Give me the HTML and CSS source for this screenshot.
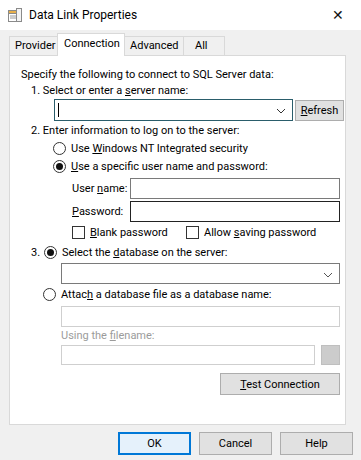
FILE: index.html
```html
<!DOCTYPE html>
<html lang="en">
<head>
    <meta charset="UTF-8">
    <title>Data Link Properties</title>
    <link rel="stylesheet" href="styles.css">
</head>
<body>
    <div class="dlg_titlebar">
        <svg class="dlg_icon" width="16" height="16" viewBox="0 0 16 16">
            <rect x="1.5" y="3.5" width="10" height="11" fill="#fff" stroke="#8a8a8a"/>
            <rect x="1.5" y="3.5" width="10" height="3" fill="#e8b04a" stroke="#8a8a8a"/>
            <rect x="9.5" y="1.5" width="5" height="13" fill="#f4f4f4" stroke="#8a8a8a"/>
            <line x1="3" y1="9" x2="9" y2="9" stroke="#9a9a9a"/>
            <line x1="3" y1="11" x2="9" y2="11" stroke="#9a9a9a"/>
        </svg>
        <span class="dlg_title">Data Link Properties</span>
        <span class="dlg_close">&#x2715;</span>
    </div>

    <div class="dlg_body">
        <div class="dlg_tabs">
            <div class="dlg_tab tab_provider">Provider</div>
            <div class="dlg_tab dlg_tab_active">Connection</div>
            <div class="dlg_tab tab_advanced">Advanced</div>
            <div class="dlg_tab tab_all">All</div>
        </div>

        <div class="dlg_panel">
            <div class="row_text">Specify the following to connect to SQL Server data:</div>
            <div class="row_text indent1">1. Select or enter a <u>s</u>erver name:</div>
            <div class="row_server">
                <div class="combo combo_focus">
                    <span class="caret"></span>
                    <svg class="chev" width="10" height="6" viewBox="0 0 10 6"><path d="M1 1 L5 5 L9 1" fill="none" stroke="#333"/></svg>
                </div>
                <button class="btn btn_refresh"><u>R</u>efresh</button>
            </div>
            <div class="row_text indent1 step2">2. Enter information to log on to the server:</div>
            <div class="row_opt indent2 opt_first"><span class="radio"></span><span>Use <u>W</u>indows NT Integrated security</span></div>
            <div class="row_opt indent2"><span class="radio radio_on"></span><span><u>U</u>se a specific user name and password:</span></div>
            <div class="row_field">
                <span class="field_label">User <u>n</u>ame:</span>
                <div class="textbox"></div>
            </div>
            <div class="row_field row_field2">
                <span class="field_label"><u>P</u>assword:</span>
                <div class="textbox textbox_dark"></div>
            </div>
            <div class="row_checks">
                <span class="check_item check_first"><span class="check"></span><span><u>B</u>lank password</span></span>
                <span class="check_item"><span class="check"></span><span>Allow <u>s</u>aving password</span></span>
            </div>
            <div class="row_opt indent1 step3"><span class="num">3.</span><span class="radio radio_on"></span><span>Select the <u>d</u>atabase on the server:</span></div>
            <div class="row_db">
                <div class="combo">
                    <svg class="chev" width="10" height="6" viewBox="0 0 10 6"><path d="M1 1 L5 5 L9 1" fill="none" stroke="#555"/></svg>
                </div>
            </div>
            <div class="row_opt attach"><span class="radio"></span><span>Attac<u>h</u> a database file as a database name:</span></div>
            <div class="row_db2"><div class="textbox textbox_off"></div></div>
            <div class="row_text disabled_text">Using the <u>f</u>ilename:</div>
            <div class="row_file">
                <div class="textbox textbox_off"></div>
                <span class="browse_btn"></span>
            </div>
            <div class="row_test">
                <button class="btn btn_test"><u>T</u>est Connection</button>
            </div>
        </div>

        <div class="dlg_footer">
            <button class="btn btn_foot btn_default">OK</button>
            <button class="btn btn_foot">Cancel</button>
            <button class="btn btn_foot">Help</button>
        </div>
    </div>
</body>
</html>
```

FILE: styles.css
```css
* {
    margin: 0;
    padding: 0;
    box-sizing: border-box;
}

body {
    width: 361px;
    height: 460px;
    overflow: hidden;
    font-family: Roboto, "Liberation Sans", Arial, sans-serif;
    font-size: 11px;
    color: #000;
    background: #f0f0f0;
    white-space: nowrap;
}

u {
    text-decoration: underline;
    text-underline-offset: 1px;
}

.dlg_titlebar {
    height: 30px;
    background: #fff;
    display: flex;
    align-items: center;
    padding-left: 7px;
}

.dlg_icon {
    margin-right: 6px;
}

.dlg_title {
    font-size: 12px;
    flex: 1;
}

.dlg_close {
    width: 46px;
    text-align: center;
    font-size: 14px;
    color: #111;
}

.dlg_body {
    padding: 6px 15px 0 9px;
}

.dlg_tabs {
    display: flex;
    height: 19px;
    align-items: flex-end;
}

.dlg_tab {
    height: 19px;
    padding-left: 5px;
    line-height: 18px;
    border: 1px solid #d9d9d9;
    border-bottom: none;
    background: #f0f0f0;
}

.tab_provider {
    width: 49px;
    margin-right: -1px;
}

.dlg_tab_active {
    width: 68px;
    height: 23px;
    background: #fff;
    padding-left: 6px;
    line-height: 20px;
    position: relative;
    z-index: 1;
    margin-bottom: -1px;
}

.tab_advanced {
    width: 60px;
    margin-left: -1px;
}

.tab_all {
    width: 42px;
    margin-left: -1px;
    padding-left: 11px;
}

.dlg_panel {
    height: 370px;
    background: #fff;
    border: 1px solid #d9d9d9;
    padding: 11px 0 0 11px;
}

.row_text {
    height: 16px;
    line-height: 16px;
}

.indent1 {
    padding-left: 10px;
}

.row_server {
    display: flex;
    margin-left: 33px;
    height: 23px;
    align-items: flex-start;
}

.combo {
    height: 22px;
    border: 1px solid #7a7a7a;
    background: #fff;
    position: relative;
    flex: 1;
}

.combo_focus {
    border-color: #2a5d6b;
    flex: none;
    width: 239px;
}

.caret {
    position: absolute;
    left: 3px;
    top: 3px;
    width: 1px;
    height: 14px;
    background: #000;
}

.chev {
    position: absolute;
    right: 6px;
    top: 8px;
}

.btn {
    font-family: inherit;
    font-size: 11px;
    color: #000;
    background: #e1e1e1;
    border: 1px solid #adadad;
}

.btn_refresh {
    width: 49px;
    height: 21px;
    margin-left: 2px;
    margin-top: 1px;
}

.step2 {
    margin-top: 1px;
}

.row_opt {
    display: flex;
    align-items: center;
    height: 18px;
}

.indent2 {
    padding-left: 32px;
}

.radio {
    width: 13px;
    height: 13px;
    border: 1px solid #333;
    border-radius: 50%;
    margin-right: 5px;
    position: relative;
    background: #fff;
    flex: none;
}

.radio_on::after {
    content: "";
    position: absolute;
    left: 2px;
    top: 2px;
    width: 7px;
    height: 7px;
    border-radius: 50%;
    background: #111;
}

.row_field {
    display: flex;
    align-items: center;
    height: 21px;
    margin-top: 3px;
    padding-left: 51px;
}

.row_field2 {
    margin-top: 2px;
}

.field_label {
    width: 58px;
    flex: none;
}

.textbox {
    flex: 1;
    height: 21px;
    border: 1px solid #7a7a7a;
    background: #fff;
    margin-right: 5px;
}

.textbox_dark {
    border-color: #222;
}

.textbox_off {
    border-color: #cfcfcf;
}

.row_checks {
    display: flex;
    align-items: center;
    height: 18px;
    margin-top: 1px;
    padding-left: 51px;
}

.check_item {
    display: flex;
    align-items: center;
}

.check_first {
    width: 114px;
}

.check {
    width: 13px;
    height: 13px;
    border: 1px solid #333;
    background: #fff;
    margin-right: 5px;
    flex: none;
}

.step3 {
    margin-top: 2px;
}

.num {
    width: 13px;
}

.row_db {
    display: flex;
    padding-left: 40px;
    padding-right: 5px;
    height: 21px;
    margin-top: 2px;
}

.row_db .combo {
    height: 21px;
}

.attach {
    padding-left: 22px;
    margin-top: 1px;
}

.row_db2 {
    display: flex;
    padding-left: 40px;
    height: 21px;
    margin-top: 3px;
}

.disabled_text {
    color: #9b9b9b;
    padding-left: 40px;
    margin-top: 1px;
}

.row_file {
    display: flex;
    padding-left: 40px;
    height: 20px;
    margin-top: 1px;
}

.row_file .textbox {
    height: 20px;
    margin-right: 6px;
}

.browse_btn {
    width: 19px;
    height: 20px;
    background: #cccccc;
    border: 1px solid #bfbfbf;
    margin-right: 5px;
}

.row_test {
    display: flex;
    justify-content: flex-end;
    padding-right: 5px;
    margin-top: 8px;
}

.btn_test {
    width: 120px;
    height: 22px;
}

.dlg_footer {
    display: flex;
    justify-content: flex-end;
    gap: 8px;
    margin-top: 7px;
    margin-right: -7px;
}

.btn_foot {
    width: 73px;
    height: 23px;
}

.btn_default {
    border: 1px solid #0078d7;
    background: #e5f1fb;
    box-shadow: inset 0 0 0 1px #0078d7;
}
```
